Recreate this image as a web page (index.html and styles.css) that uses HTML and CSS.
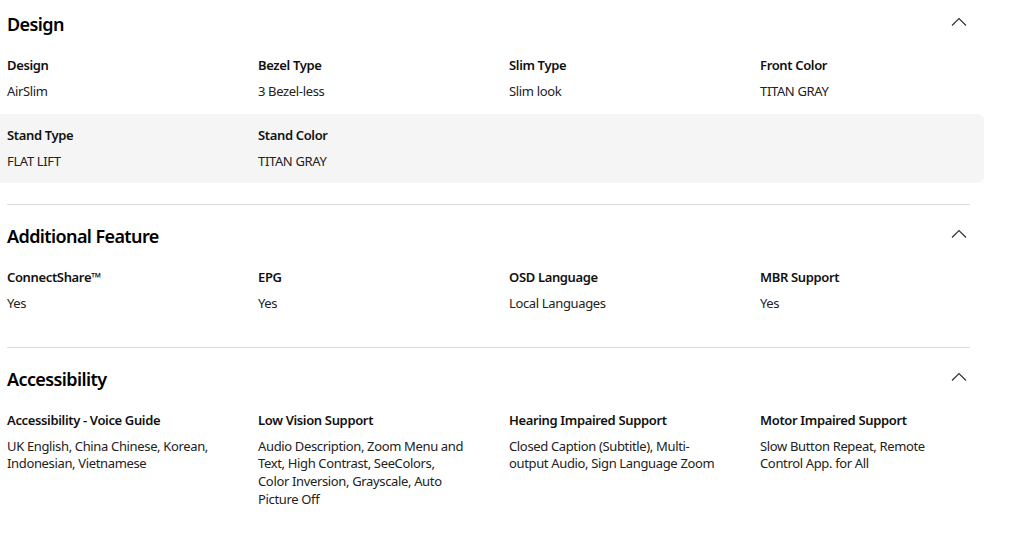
FILE: index.html
```html
<!DOCTYPE html>
<html lang="en">
<head>
<meta charset="utf-8">
<title>Specs</title>
<link rel="stylesheet" href="styles.css">
</head>
<body>
<div class="specs">
  <section class="spec-section first">
    <div class="spec-header">
      <h2 class="spec-title">Design</h2>
      <svg class="chevron" width="16" height="10" viewBox="0 0 16 10"><path d="M1 8.5 L8 1.5 L15 8.5" fill="none" stroke="#333" stroke-width="1.2"/></svg>
    </div>
    <div class="spec-row">
      <div class="spec-item"><div class="label">Design</div><div class="value">AirSlim</div></div>
      <div class="spec-item"><div class="label">Bezel Type</div><div class="value">3 Bezel-less</div></div>
      <div class="spec-item"><div class="label">Slim Type</div><div class="value">Slim look</div></div>
      <div class="spec-item"><div class="label">Front Color</div><div class="value">TITAN GRAY</div></div>
    </div>
    <div class="spec-row shaded">
      <div class="spec-item"><div class="label">Stand Type</div><div class="value">FLAT LIFT</div></div>
      <div class="spec-item"><div class="label">Stand Color</div><div class="value">TITAN GRAY</div></div>
    </div>
  </section>
  <section class="spec-section">
    <div class="spec-header">
      <h2 class="spec-title">Additional Feature</h2>
      <svg class="chevron" width="16" height="10" viewBox="0 0 16 10"><path d="M1 8.5 L8 1.5 L15 8.5" fill="none" stroke="#333" stroke-width="1.2"/></svg>
    </div>
    <div class="spec-row">
      <div class="spec-item"><div class="label">ConnectShare™</div><div class="value">Yes</div></div>
      <div class="spec-item"><div class="label">EPG</div><div class="value">Yes</div></div>
      <div class="spec-item"><div class="label">OSD Language</div><div class="value">Local Languages</div></div>
      <div class="spec-item"><div class="label">MBR Support</div><div class="value">Yes</div></div>
    </div>
  </section>
  <section class="spec-section last">
    <div class="spec-header">
      <h2 class="spec-title">Accessibility</h2>
      <svg class="chevron" width="16" height="10" viewBox="0 0 16 10"><path d="M1 8.5 L8 1.5 L15 8.5" fill="none" stroke="#333" stroke-width="1.2"/></svg>
    </div>
    <div class="spec-row">
      <div class="spec-item"><div class="label">Accessibility - Voice Guide</div><div class="value">UK English, China Chinese, Korean, Indonesian, Vietnamese</div></div>
      <div class="spec-item"><div class="label">Low Vision Support</div><div class="value">Audio Description, Zoom Menu and Text, High Contrast, SeeColors, Color Inversion, Grayscale, Auto Picture Off</div></div>
      <div class="spec-item"><div class="label">Hearing Impaired Support</div><div class="value">Closed Caption (Subtitle), Multi-output Audio, Sign Language Zoom</div></div>
      <div class="spec-item"><div class="label">Motor Impaired Support</div><div class="value">Slow Button Repeat, Remote Control App. for All</div></div>
    </div>
  </section>
</div>
</body>
</html>
```

FILE: styles.css
```css
* { box-sizing: border-box; }
html, body { margin: 0; padding: 0; background: #fff; }
body {
  font-family: "Noto Sans", "Open Sans", "Liberation Sans", sans-serif;
  color: #111;
}
.specs {
  width: 970px;
  padding-left: 7px;
}
.spec-section {
  border-bottom: 1px solid #dcdcdc;
  padding-bottom: 21px;
}
.spec-section.last { border-bottom: none; }
.spec-header {
  display: flex;
  align-items: center;
  justify-content: space-between;
  padding: 20px 2px 9px 0;
  height: 51px;
}
.first .spec-header { padding-top: 13px; height: 44px; }
.spec-title {
  margin: 0;
  font-size: 18px;
  line-height: 22px;
  font-weight: 600;
  letter-spacing: -0.6px;
  color: #000;
}
.chevron { display: block; margin-right: 1px; margin-top: -4px; }
.spec-row {
  display: grid;
  grid-template-columns: repeat(4, 251px);
  padding: 12px 0 13px;
}
.spec-row.shaded {
  background: #f5f5f5;
  margin-left: -7px;
  padding-left: 7px;
  width: 984px;
  border-radius: 0 6px 6px 0;
}
.spec-item { padding-right: 43px; }
.label {
  font-size: 13px;
  line-height: 18px;
  font-weight: 600;
  letter-spacing: -0.35px;
  color: #111;
}
.value {
  margin-top: 9px;
  font-size: 13px;
  line-height: 17.6px;
  letter-spacing: -0.35px;
  color: #222;
}
```
